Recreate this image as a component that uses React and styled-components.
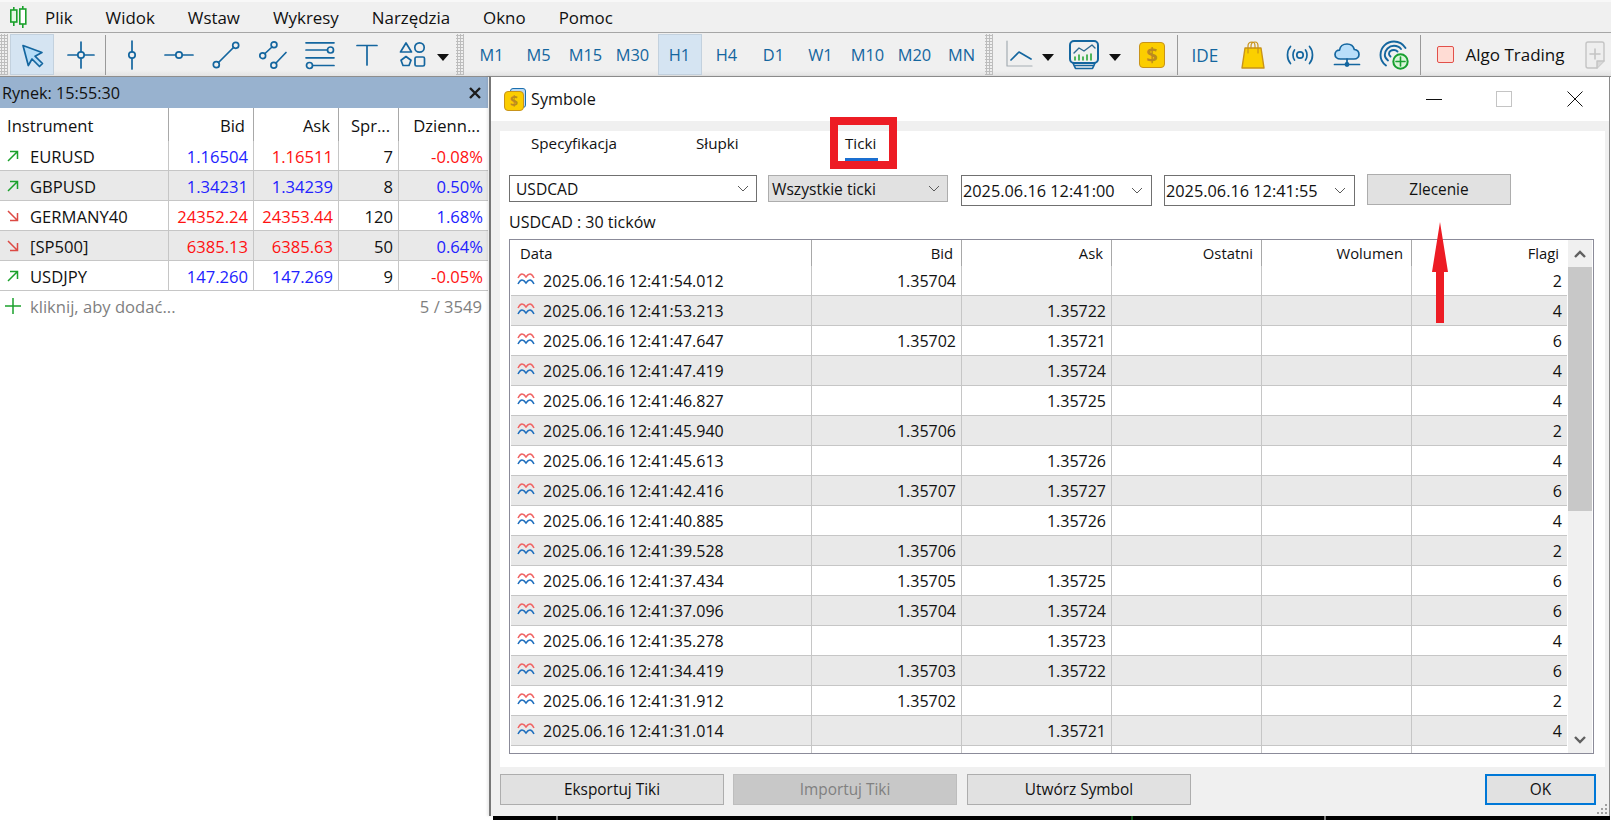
import React from "react";
import styled, { createGlobalStyle } from "styled-components";

const GlobalStyle = createGlobalStyle`
  html, body { margin: 0; padding: 0; background: #fff; }
  body { font-family: "Open Sans", "Liberation Sans", sans-serif; font-size: 16px; color: #111; overflow: hidden; }
  * { box-sizing: border-box; }
`;

const Page = styled.div`
  width: 1611px;
  height: 820px;
  display: flex;
  flex-direction: column;
  overflow: hidden;
`;

/* menu */
const MenuBar = styled.div`
  height: 33px;
  flex: none;
  padding-left: 10px;
  display: flex;
  align-items: center;
  background: #f0f0f0;
  border-top: 2px solid #f8f8f8;
  border-bottom: 1px solid #a6a6a6;
  font-size: 16.9px;
`;
const MenuItems = styled.div`
  display: flex;
  gap: 33px;
  margin-left: 18px;
`;

/* toolbar */
const Toolbar = styled.div`
  height: 44px;
  flex: none;
  padding-top: 1px;
  display: flex;
  align-items: flex-start;
  background: linear-gradient(#f0f0f0 86%, #e3e3e3);
  border-bottom: 1px solid #8e8e8e;
`;
const Grip = styled.div`
  width: 8px;
  height: 41px;
  margin-left: ${p => p.$ml || 0}px;
  flex: none;
  background: radial-gradient(circle, #bdbdbd 1px, transparent 1.2px) 0 0 / 3px 3px;
`;
const Tool = styled.div`
  width: ${p => p.$w || 44}px;
  height: 41px;
  margin-left: ${p => (p.$ml === undefined ? 3 : p.$ml)}px;
  flex: none;
  display: flex;
  align-items: center;
  justify-content: center;
  color: #14669f;
  font-size: 16.4px;
  background: ${p => (p.$active ? "#d5e4f2" : "transparent")};
  border: 1px solid ${p => (p.$active ? "#c3d1de" : "transparent")};
`;
const IdeLabel = styled.span`
  font-size: 19px;
  margin-left: -2px;
  transform: scaleX(0.9);
`;
const Separator = styled.div`
  width: 1px;
  height: 40px;
  flex: none;
  background: #9a9a9a;
  margin-left: ${p => p.$ml}px;
  margin-right: ${p => p.$mr}px;
  margin-top: 1px;
`;
const Caret = styled.div`
  width: 0;
  height: 0;
  border-left: 6px solid transparent;
  border-right: 6px solid transparent;
  border-top: 7px solid #111;
  margin-top: 6px;
`;
const ToolSvg = styled.svg.attrs({ viewBox: "0 0 30 30" })`
  width: 30px;
  height: 30px;
  flex: none;
  fill: none;
  stroke: #14669f;
  stroke-width: 1.7;
  stroke-linecap: round;
  stroke-linejoin: round;
`;
const DollarBox = styled.div`
  width: ${p => p.$size}px;
  height: ${p => p.$size}px;
  flex: none;
  display: flex;
  align-items: center;
  justify-content: center;
  position: relative;
  background: #fbcd00;
  border: 1.5px solid #c8931a;
  border-radius: 4px;
  color: #bb8a20;
  font-weight: 700;
  font-size: ${p => p.$size - 6}px;
  line-height: 1;
`;
const AlgoCheck = styled.div`
  width: 17px;
  height: 17px;
  flex: none;
  margin: 12px 0 0 16px;
  background: #ffdcd4;
  border: 1.5px solid #e2504a;
  border-radius: 2px;
`;
const AlgoLabel = styled.div`
  margin-left: 12px;
  line-height: 41px;
  font-size: 17px;
  white-space: nowrap;
`;
const Push = styled.div`
  margin-left: auto;
  padding-right: 1px;
`;

/* workspace */
const Workspace = styled.div`
  flex: 1;
  display: flex;
  min-height: 0;
`;
const Market = styled.div`
  width: 488px;
  flex: none;
`;
const MarketTitle = styled.div`
  height: 31px;
  padding: 0 6px 0 2px;
  display: flex;
  align-items: center;
  justify-content: space-between;
  background: #98b2cf;
  font-size: 16.2px;
`;
const CloseGlyph = styled.svg.attrs({ viewBox: "0 0 12 12" })`
  width: 12px;
  height: 12px;
  margin-right: 1px;
  fill: none;
  stroke: #1c1c1c;
  stroke-width: 2.4;
`;
const MarketRow = styled.div`
  display: grid;
  grid-template-columns: 169px 85px 85px 60px 89px;
  height: ${p => (p.$head ? 33 : 30)}px;
  background: ${p => (p.$alt ? "#e9e9e9" : "#fff")};
  border-bottom: ${p => (p.$head ? "none" : "1px solid #c6c6c6")};
`;
const MarketCell = styled.div`
  display: flex;
  align-items: center;
  justify-content: ${p => (p.$left ? "flex-start" : "flex-end")};
  padding: ${p => (p.$left ? "1px 0 0 7px" : p.$head ? "1px 8px 0 0" : "1px 5px 0 0")};
  border-right: ${p => (p.$last ? "none" : p.$head ? "1px solid #a8a8a8" : "1px solid #c6c6c6")};
  color: ${p => p.$color || "#111"};
  font-size: 16.6px;
  white-space: nowrap;
`;
const Trend = styled.svg.attrs({ viewBox: "0 0 12 12" })`
  width: 12px;
  height: 12px;
  margin-right: 11px;
  flex: none;
  fill: none;
  stroke: ${p => (p.$up ? "#1ba12c" : "#dc4a44")};
  stroke-width: 1.5;
`;
const AddRow = styled.div`
  height: 30px;
  padding: 0 6px 0 5px;
  display: flex;
  align-items: center;
  color: #7f7f7f;
  font-size: 16.6px;
`;
const AddPlus = styled.svg.attrs({ viewBox: "0 0 16 16" })`
  width: 16px;
  height: 16px;
  margin-right: 9px;
  fill: none;
  stroke: #1ba12c;
  stroke-width: 1.5;
`;
const AddCount = styled.span`
  margin-left: auto;
`;

/* dialog */
const DialogColumn = styled.div`
  flex: 1;
  margin: -1px 0 0 1px;
  display: flex;
  flex-direction: column;
  min-width: 0;
`;
const Dialog = styled.div`
  width: 1121px;
  height: 740px;
  flex: none;
  position: relative;
  display: flex;
  flex-direction: column;
  background: #f0f0f0;
  border: 1px solid #8a8a8a;
  border-left: 2px solid #777;
  border-bottom: none;
  box-shadow: -2px 0 2px rgba(0, 0, 0, 0.08);
`;
const DialogTitle = styled.div`
  height: 44px;
  flex: none;
  display: flex;
  align-items: center;
  padding-left: 13px;
  background: #fff;
`;
const TitleIcon = styled.div`
  width: 22px;
  height: 23px;
  position: relative;
  margin-right: 5px;
`;
const TitleIconBack = styled.div`
  position: absolute;
  top: 0;
  right: 0;
  width: 16px;
  height: 20px;
  background: #bcd8ef;
  border: 1.5px solid #1a6fb0;
  border-radius: 3px;
`;
const TitleIconFront = styled(DollarBox)`
  position: absolute;
  left: 0;
  bottom: 0;
  font-size: 14px;
`;
const TitleText = styled.div`
  font-size: 16.2px;
`;
const WinButtons = styled.div`
  margin-left: auto;
  display: flex;
  align-items: center;
  padding-right: 26px;
`;
const WinSvg = styled.svg.attrs({ viewBox: "0 0 16 16" })`
  width: 16px;
  height: 16px;
  margin-left: ${p => p.$ml}px;
  fill: none;
  stroke: ${p => p.$stroke || "#111"};
  stroke-width: 1;
`;
const Content = styled.div`
  flex: 1;
  margin: 10px 4px 0 9px;
  padding: 0 11px 13px 9px;
  display: flex;
  flex-direction: column;
  min-height: 0;
  background: #fff;
`;
const Tabs = styled.div`
  height: 44px;
  flex: none;
  display: flex;
`;
const Tab = styled.div`
  width: ${p => p.$w}px;
  margin-left: ${p => p.$ml}px;
  line-height: 24px;
  font-size: 15.2px;
  position: relative;
`;
const TabBar = styled.div`
  position: absolute;
  left: 0;
  top: 27px;
  width: 33px;
  height: 3px;
  background: #1a6fd0;
`;
const RedBox = styled.div`
  position: absolute;
  left: -15px;
  top: -14px;
  width: 67px;
  height: 52px;
  border: 8px solid #ed1c24;
`;
const Controls = styled.div`
  height: 31px;
  flex: none;
  display: flex;
  align-items: flex-start;
`;
const Combo = styled.div`
  width: ${p => p.$w}px;
  height: ${p => p.$h}px;
  margin-right: ${p => p.$mr}px;
  flex: none;
  display: flex;
  align-items: center;
  justify-content: space-between;
  padding: 0 ${p => p.$pr}px 0 ${p => p.$pl}px;
  background: ${p => (p.$gray ? "#e1e1e1" : "#fff")};
  border: 1px solid ${p => (p.$gray ? "#adadad" : "#707070")};
  font-size: ${p => p.$fs || 15.6}px;
  white-space: nowrap;
`;
const ComboArrow = styled.svg.attrs({ viewBox: "0 0 12 7" })`
  width: 12px;
  height: 7px;
  flex: none;
  fill: none;
  stroke: #5a5a5a;
  stroke-width: 1;
`;
const PlainButton = styled.div`
  width: ${p => p.$w}px;
  height: 31px;
  margin-left: ${p => p.$ml || 0}px;
  margin-top: ${p => p.$mt || 0}px;
  flex: none;
  display: flex;
  align-items: center;
  justify-content: center;
  background: ${p => (p.$off ? "#c8c8c8" : "#e1e1e1")};
  border: ${p => (p.$primary ? "2px solid #0078d7" : p.$off ? "1px solid #bdbdbd" : "1px solid #adadad")};
  color: ${p => (p.$off ? "#808080" : "#111")};
  font-size: 15.4px;
`;
const Summary = styled.div`
  height: 33px;
  flex: none;
  line-height: 33px;
  font-size: 16px;
`;
const TickTable = styled.div`
  height: 515px;
  flex: none;
  display: flex;
  padding: 0 2px 0 1px;
  border: 1px solid #8b8b99;
  overflow: hidden;
`;
const TickBody = styled.div`
  width: 1056px;
  flex: none;
  overflow: hidden;
`;
const TickRow = styled.div`
  display: grid;
  grid-template-columns: 301px 150px 150px 150px 150px 155px;
  height: ${p => (p.$head ? 26 : 30)}px;
  background: ${p => (p.$alt ? "#e9e9e9" : "#fff")};
  border-bottom: ${p => (p.$head ? "none" : "1px solid #c6c6c6")};
`;
const TickCell = styled.div`
  display: flex;
  align-items: center;
  justify-content: ${p => (p.$left ? "flex-start" : "flex-end")};
  padding: ${p => (p.$left ? `0 0 0 ${p.$head ? 9 : 6}px` : p.$head ? "0 8px 0 0" : "0 5px 0 0")};
  border-right: ${p => (p.$last ? "none" : p.$head ? "1px solid #a8a8a8" : "1px solid #c6c6c6")};
  font-size: ${p => (p.$head ? 14.8 : 16)}px;
  white-space: nowrap;
`;
const Wave = styled.svg.attrs({ viewBox: "0 0 18 12" })`
  width: 18px;
  height: 12px;
  margin: -3px 8px 0 0;
  flex: none;
  fill: none;
  stroke-width: 1.5;
`;
const Scroll = styled.div`
  width: 24px;
  flex: none;
  margin-left: 1px;
  display: flex;
  flex-direction: column;
  background: #f0f0f0;
`;
const ScrollEnd = styled.div`
  height: 27px;
  flex: none;
  display: flex;
  align-items: center;
  justify-content: center;
`;
const ScrollTrack = styled.div`
  flex: 1;
  min-height: 0;
`;
const ScrollThumb = styled.div`
  height: 244px;
  background: #c8c8c8;
`;
const ScrollChevron = styled.svg.attrs({ viewBox: "0 0 12 8" })`
  width: 12px;
  height: 8px;
  flex: none;
  fill: none;
  stroke: #606060;
  stroke-width: 2.4;
`;
const Footer = styled.div`
  height: 49px;
  flex: none;
  padding: 7px 13px 0 9px;
  display: flex;
  align-items: flex-start;
`;
const ResizeGrip = styled.svg.attrs({ viewBox: "0 0 12 12" })`
  position: absolute;
  right: 1px;
  bottom: 1px;
  width: 12px;
  height: 12px;
  fill: #a0a0a0;
`;
const RedArrow = styled.svg.attrs({ viewBox: "0 0 16 101" })`
  position: absolute;
  left: 941px;
  top: 145px;
  width: 16px;
  height: 101px;
  fill: #ed1c24;
`;
const ChartStrip = styled.svg`
  width: 1117px;
  height: 4px;
  flex: none;
  margin-left: 4px;
  display: block;
  background: #000;
`;

const marketRows = [
  { name: "EURUSD", up: true, bid: "1.16504", bidUp: true, ask: "1.16511", askUp: false, spread: "7", daily: "-0.08%", dailyUp: false },
  { name: "GBPUSD", up: true, bid: "1.34231", bidUp: true, ask: "1.34239", askUp: true, spread: "8", daily: "0.50%", dailyUp: true },
  { name: "GERMANY40", up: false, bid: "24352.24", bidUp: false, ask: "24353.44", askUp: false, spread: "120", daily: "1.68%", dailyUp: true },
  { name: "[SP500]", up: false, bid: "6385.13", bidUp: false, ask: "6385.63", askUp: false, spread: "50", daily: "0.64%", dailyUp: true },
  { name: "USDJPY", up: true, bid: "147.260", bidUp: true, ask: "147.269", askUp: true, spread: "9", daily: "-0.05%", dailyUp: false }
];

const ticks = [
  ["2025.06.16 12:41:54.012", "1.35704", "", "2"],
  ["2025.06.16 12:41:53.213", "", "1.35722", "4"],
  ["2025.06.16 12:41:47.647", "1.35702", "1.35721", "6"],
  ["2025.06.16 12:41:47.419", "", "1.35724", "4"],
  ["2025.06.16 12:41:46.827", "", "1.35725", "4"],
  ["2025.06.16 12:41:45.940", "1.35706", "", "2"],
  ["2025.06.16 12:41:45.613", "", "1.35726", "4"],
  ["2025.06.16 12:41:42.416", "1.35707", "1.35727", "6"],
  ["2025.06.16 12:41:40.885", "", "1.35726", "4"],
  ["2025.06.16 12:41:39.528", "1.35706", "", "2"],
  ["2025.06.16 12:41:37.434", "1.35705", "1.35725", "6"],
  ["2025.06.16 12:41:37.096", "1.35704", "1.35724", "6"],
  ["2025.06.16 12:41:35.278", "", "1.35723", "4"],
  ["2025.06.16 12:41:34.419", "1.35703", "1.35722", "6"],
  ["2025.06.16 12:41:31.912", "1.35702", "", "2"],
  ["2025.06.16 12:41:31.014", "", "1.35721", "4"]
];

const periods = ["M1", "M5", "M15", "M30", "H1", "H4", "D1", "W1", "M10", "M20", "MN"];

const priceColor = up => (up ? "#2222ff" : "#ff1111");

const Logo = () => (
  <svg width="17" height="22" viewBox="0 0 17 22" fill="none" stroke="#1ba12c" strokeWidth="1.6">
    <path d="M3.8 1V4M3.8 16V20M12.8 0V3M12.8 18V22" />
    <rect x="0.8" y="4" width="6" height="12" fill="#e2f7e2" />
    <rect x="9.8" y="3" width="6" height="15" fill="#fff" />
  </svg>
);

const ArrowIcon = () => (
  <ToolSvg>
    <path d="M6 5.5L25 12.5L18 16.2L25.5 23.5L22.5 26.5L15 19L11.3 25.5Z" fill="#b5dcf7" />
  </ToolSvg>
);
const CrossIcon = () => (
  <ToolSvg>
    <path d="M15 2V11.5M15 18.5V28M2 15H11.5M18.5 15H28" />
    <circle cx="15" cy="15" r="3.2" />
  </ToolSvg>
);
const VLineIcon = () => (
  <ToolSvg>
    <path d="M15 1V11.5M15 18.5V29" />
    <circle cx="15" cy="15" r="3.2" />
  </ToolSvg>
);
const HLineIcon = () => (
  <ToolSvg>
    <path d="M1 15H11.5M18.5 15H29" />
    <circle cx="15" cy="15" r="3.2" />
  </ToolSvg>
);
const TrendLineIcon = () => (
  <ToolSvg>
    <path d="M7.5 22.5L22.5 7.5" />
    <circle cx="5.3" cy="24.7" r="3" />
    <circle cx="24.7" cy="5.3" r="3" />
  </ToolSvg>
);
const ChannelIcon = () => (
  <ToolSvg>
    <path d="M7 13.5L14 7M18 23L28 12.5" />
    <circle cx="4.7" cy="15.7" r="2.9" />
    <circle cx="16" cy="4.7" r="2.9" />
    <circle cx="15.8" cy="25.3" r="2.9" />
  </ToolSvg>
);
const FiboIcon = () => (
  <ToolSvg>
    <path d="M1 2.8H29M1 10H22M1 17.8H29M8 25.5H29" />
    <circle cx="25.5" cy="10" r="3" />
    <circle cx="4.5" cy="25.5" r="3" />
  </ToolSvg>
);
const TextIcon = () => (
  <ToolSvg>
    <path d="M5 5.5H25M15 5.5V25" />
  </ToolSvg>
);
const ShapesIcon = () => (
  <ToolSvg>
    <path d="M9 3L14.5 12H3.5Z" />
    <circle cx="22.5" cy="7.5" r="4.7" />
    <path d="M9 16.5L14 20.2L12 25.5H6L4 20.2Z" />
    <rect x="18" y="17" width="9.5" height="9" rx="1.5" />
  </ToolSvg>
);
const LineChartIcon = () => (
  <ToolSvg>
    <path d="M2 1V26H27" stroke="#a5adb3" strokeWidth="1.2" />
    <path d="M6 20L14 12L26 19" />
  </ToolSvg>
);
const MonitorIcon = () => (
  <ToolSvg>
    <rect x="1" y="1" width="28" height="22" rx="4" strokeWidth="2" />
    <path d="M5 13L10 8L15 11L23 5L26 8" stroke="#2f6a90" strokeWidth="1.4" />
    <path d="M6 17V20M10 15V20M14 17V20M18 15V20M22 14V20" stroke="#1ba12c" strokeWidth="1.5" />
    <path d="M4 23L6.5 28.5H23.5L26 23M5 25.5H25" />
  </ToolSvg>
);
const BagIcon = () => (
  <ToolSvg>
    <path d="M7 8H23L26 28H4Z" fill="#fbd000" stroke="#c8931a" strokeWidth="1.4" />
    <path d="M10 13V6C10 3 12 2 14 2C16 2 17 3 17 6V8M13 8V6C13 3 15 2 17 2C19 2 20 3 20 6V13" stroke="#c8931a" strokeWidth="1.2" />
  </ToolSvg>
);
const SignalIcon = () => (
  <ToolSvg>
    <circle cx="15" cy="15" r="3.2" />
    <path d="M9.5 10C7.5 12.5 7.5 17.5 9.5 20M20.5 10C22.5 12.5 22.5 17.5 20.5 20M5.5 6.5C1.5 11 1.5 19 5.5 23.5M24.5 6.5C28.5 11 28.5 19 24.5 23.5" />
  </ToolSvg>
);
const CloudIcon = () => (
  <ToolSvg>
    <path d="M8.5 19C5 19 3 17 3 14.5C3 12 5 10.2 7.5 10.2C8 6.5 11 4 15 4C18.5 4 21.5 6.2 22.3 9.5C25 9.8 27 11.8 27 14.5C27 17 25 19 22 19Z" fill="#b9dffa" />
    <path d="M15 19V24.5M2.5 24.5H27.5" />
    <circle cx="15" cy="24.5" r="1.6" fill="#14669f" />
  </ToolSvg>
);
const VpsIcon = () => (
  <ToolSvg>
    <path d="M7 25.5C3.5 23 1.5 19.5 1.5 15C1.5 7.5 7.5 1.5 15 1.5C20 1.5 24 4 26.5 8" strokeWidth="1.9" />
    <path d="M9 20.5C7 19 5.8 17.3 5.8 15C5.8 10 10 5.8 15 5.8C18 5.8 20.5 7 22 9" strokeWidth="1.9" />
    <path d="M11.5 16.5C10.5 15.5 10 15 10 14C10 11.5 12 10 15 10C16.5 10 17.5 10.5 18.5 11.5" strokeWidth="1.9" />
    <circle cx="21.5" cy="21.5" r="7.2" fill="#d8f5d8" stroke="#18a030" strokeWidth="2" />
    <path d="M21.5 17V26M17 21.5H26" stroke="#18a030" strokeWidth="1.6" />
  </ToolSvg>
);
const NewDocIcon = () => (
  <ToolSvg>
    <path d="M8 2H22C23 2 24 3 24 4V21L17 28H8C7 28 6 27 6 26V4C6 3 7 2 8 2Z" fill="#eeeeee" stroke="#c4c4c4" strokeWidth="1.4" />
    <path d="M24 21H17V28" stroke="#c4c4c4" strokeWidth="1.4" fill="#d8d8d8" />
    <path d="M15 9V19M10 14H20" stroke="#c4c4c4" strokeWidth="1.6" />
  </ToolSvg>
);

const TickWave = () => (
  <Wave>
    <path d="M1 5Q3 1 5 1Q7 1 9 4Q11 1 13 1Q15 1 17 5" stroke="#f06464" />
    <path d="M1 11Q3 7 5 7Q7 7 9 10Q11 7 13 7Q15 7 17 11" stroke="#1f6fbe" />
  </Wave>
);

const Chevron = () => (
  <ComboArrow>
    <path d="M1 1L6 6L11 1" />
  </ComboArrow>
);

const MarketTable = () => (
  <>
    <MarketRow $head>
      <MarketCell $left $head>Instrument</MarketCell>
      <MarketCell $head>Bid</MarketCell>
      <MarketCell $head>Ask</MarketCell>
      <MarketCell $head>Spr...</MarketCell>
      <MarketCell $head $last>Dzienn...</MarketCell>
    </MarketRow>
    {marketRows.map((row, i) => (
      <MarketRow key={row.name} $alt={i % 2 === 1}>
        <MarketCell $left>
          <Trend $up={row.up}>
            {row.up ? <path d="M1 11L10.5 1.5M3 1.5H10.5V9" /> : <path d="M1 1L10.5 10.5M3 10.5H10.5V3" />}
          </Trend>
          {row.name}
        </MarketCell>
        <MarketCell $color={priceColor(row.bidUp)}>{row.bid}</MarketCell>
        <MarketCell $color={priceColor(row.askUp)}>{row.ask}</MarketCell>
        <MarketCell>{row.spread}</MarketCell>
        <MarketCell $last $color={priceColor(row.dailyUp)}>{row.daily}</MarketCell>
      </MarketRow>
    ))}
    <AddRow>
      <AddPlus>
        <path d="M8 0V16M0 8H16" />
      </AddPlus>
      kliknij, aby dodać...
      <AddCount>5 / 3549</AddCount>
    </AddRow>
  </>
);

const TicksTable = () => (
  <TickTable>
    <TickBody>
      <TickRow $head>
        <TickCell $left $head>Data</TickCell>
        <TickCell $head>Bid</TickCell>
        <TickCell $head>Ask</TickCell>
        <TickCell $head>Ostatni</TickCell>
        <TickCell $head>Wolumen</TickCell>
        <TickCell $head $last>Flagi</TickCell>
      </TickRow>
      {ticks.map(([time, bid, ask, flag], i) => (
        <TickRow key={time} $alt={i % 2 === 1}>
          <TickCell $left>
            <TickWave />
            {time}
          </TickCell>
          <TickCell>{bid}</TickCell>
          <TickCell>{ask}</TickCell>
          <TickCell />
          <TickCell />
          <TickCell $last>{flag}</TickCell>
        </TickRow>
      ))}
      <TickRow>
        <TickCell />
        <TickCell />
        <TickCell />
        <TickCell />
        <TickCell />
        <TickCell $last />
      </TickRow>
    </TickBody>
    <Scroll>
      <ScrollEnd>
        <ScrollChevron>
          <path d="M1 7L6 2L11 7" />
        </ScrollChevron>
      </ScrollEnd>
      <ScrollTrack>
        <ScrollThumb />
      </ScrollTrack>
      <ScrollEnd>
        <ScrollChevron>
          <path d="M1 1L6 6L11 1" />
        </ScrollChevron>
      </ScrollEnd>
    </Scroll>
  </TickTable>
);

const App = () => (
  <Page>
    <GlobalStyle />
    <MenuBar>
      <Logo />
      <MenuItems>
        <span>Plik</span>
        <span>Widok</span>
        <span>Wstaw</span>
        <span>Wykresy</span>
        <span>Narzędzia</span>
        <span>Okno</span>
        <span>Pomoc</span>
      </MenuItems>
    </MenuBar>
    <Toolbar>
      <Grip />
      <Tool $ml={2} $active><ArrowIcon /></Tool>
      <Tool $ml={5}><CrossIcon /></Tool>
      <Separator $ml={2} $mr={1} />
      <Tool><VLineIcon /></Tool>
      <Tool><HLineIcon /></Tool>
      <Tool><TrendLineIcon /></Tool>
      <Tool><ChannelIcon /></Tool>
      <Tool><FiboIcon /></Tool>
      <Tool><TextIcon /></Tool>
      <Tool $w={40}><ShapesIcon /></Tool>
      <Tool $w={16}><Caret /></Tool>
      <Grip $ml={5} />
      {periods.map((period, i) => (
        <Tool key={period} $ml={i === 0 ? 5.5 : 3} $active={period === "H1"}>{period}</Tool>
      ))}
      <Grip $ml={1} />
      <Tool $w={30} $ml={12}><LineChartIcon /></Tool>
      <Tool $w={16} $ml={5.5}><Caret /></Tool>
      <Tool $w={30} $ml={13}><MonitorIcon /></Tool>
      <Tool $w={16} $ml={8}><Caret /></Tool>
      <Tool $w={28} $ml={15}><DollarBox $size={26}>$</DollarBox></Tool>
      <Separator $ml={11} $mr={3} />
      <Tool><IdeLabel>IDE</IdeLabel></Tool>
      <Tool><BagIcon /></Tool>
      <Tool><SignalIcon /></Tool>
      <Tool><CloudIcon /></Tool>
      <Tool><VpsIcon /></Tool>
      <Separator $ml={3.5} $mr={0} />
      <AlgoCheck />
      <AlgoLabel>Algo Trading</AlgoLabel>
      <Push>
        <Tool $w={30} $ml={0}><NewDocIcon /></Tool>
      </Push>
    </Toolbar>
    <Workspace>
      <Market>
        <MarketTitle>
          Rynek: 15:55:30
          <CloseGlyph>
            <path d="M1 1L11 11M11 1L1 11" />
          </CloseGlyph>
        </MarketTitle>
        <MarketTable />
      </Market>
      <DialogColumn>
        <Dialog>
          <DialogTitle>
            <TitleIcon>
              <TitleIconBack />
              <TitleIconFront $size={20}>$</TitleIconFront>
            </TitleIcon>
            <TitleText>Symbole</TitleText>
            <WinButtons>
              <WinSvg>
                <path d="M0 8.5H16" />
              </WinSvg>
              <WinSvg $ml={54} $stroke="#c4c4c4">
                <rect x="0.5" y="0.5" width="15" height="15" />
              </WinSvg>
              <WinSvg $ml={55}>
                <path d="M0.5 0.5L15.5 15.5M15.5 0.5L0.5 15.5" />
              </WinSvg>
            </WinButtons>
          </DialogTitle>
          <Content>
            <Tabs>
              <Tab $w={149} $ml={22}>Specyfikacja</Tab>
              <Tab $w={149} $ml={16}>Słupki</Tab>
              <Tab $w={60} $ml={0}>
                Ticki
                <TabBar />
                <RedBox />
              </Tab>
            </Tabs>
            <Controls>
              <Combo $w={248} $h={27} $mr={11} $pl={6} $pr={7}>USDCAD<Chevron /></Combo>
              <Combo $w={180} $h={27} $mr={13} $pl={3} $pr={7} $gray>Wszystkie ticki<Chevron /></Combo>
              <Combo $w={191} $h={31} $mr={12} $pl={1} $pr={8} $fs={16.3}>2025.06.16 12:41:00<Chevron /></Combo>
              <Combo $w={191} $h={31} $mr={12} $pl={1} $pr={8} $fs={16.3}>2025.06.16 12:41:55<Chevron /></Combo>
              <PlainButton $w={144} $mt={-1}>Zlecenie</PlainButton>
            </Controls>
            <Summary>USDCAD : 30 ticków</Summary>
            <TicksTable />
          </Content>
          <Footer>
            <PlainButton $w={224}>Eksportuj Tiki</PlainButton>
            <PlainButton $w={224} $ml={9} $off>Importuj Tiki</PlainButton>
            <PlainButton $w={224} $ml={10}>Utwórz Symbol</PlainButton>
            <PlainButton $w={111} $ml={294} $primary>OK</PlainButton>
          </Footer>
          <ResizeGrip>
            <rect x="9" y="1" width="2" height="2" />
            <rect x="9" y="5" width="2" height="2" />
            <rect x="9" y="9" width="2" height="2" />
            <rect x="5" y="5" width="2" height="2" />
            <rect x="5" y="9" width="2" height="2" />
            <rect x="1" y="9" width="2" height="2" />
          </ResizeGrip>
          <RedArrow>
            <path d="M8 0L16 50H12V101H4V50H0Z" />
          </RedArrow>
        </Dialog>
        <ChartStrip viewBox="0 0 1117 4">
          <path d="M64 0V4M832 0V4" stroke="#fff" />
          <path d="M639 0V4" stroke="#1ba12c" />
        </ChartStrip>
      </DialogColumn>
    </Workspace>
  </Page>
);

export default App;
